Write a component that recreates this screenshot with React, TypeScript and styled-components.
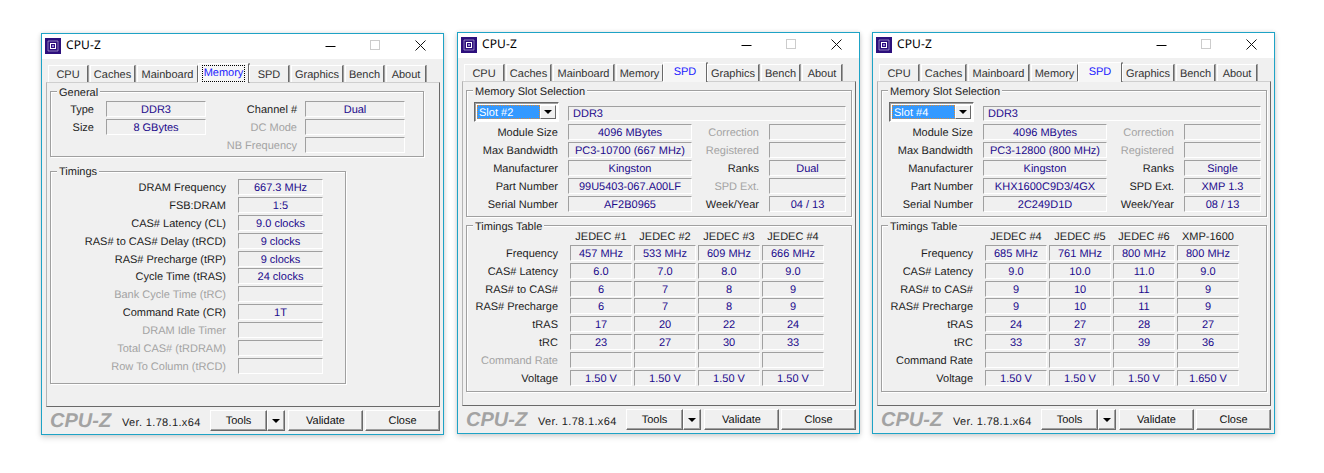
import React from "react";
import styled, { createGlobalStyle } from "styled-components";

const Global = createGlobalStyle`
  html, body { margin: 0; padding: 0; background: #fff; }
  * { box-sizing: border-box; }
`;

const Desktop = styled.div`
  display: flex;
  width: 1324px;
  height: 473px;
  padding: 32px 0 0 41px;
  gap: 13px;
  overflow: hidden;
  font-family: "Liberation Sans", Arial, sans-serif;
  font-size: 11px;
  text-rendering: geometricPrecision;
  color: #111;
`;

const Win = styled.div<{ $drop?: number; $gapFix?: number }>`
  display: flex;
  flex-direction: column;
  width: 403px;
  height: 402px;
  margin-top: ${(p) => p.$drop ?? 0}px;
  margin-right: ${(p) => p.$gapFix ?? 0}px;
  border: 1px solid #1ea3c6;
  background: #f0f0f0;
  box-shadow: 0 3px 6px rgba(0, 0, 0, 0.14), 0 0 4px rgba(0, 0, 0, 0.12);
  flex: none;
`;

const TitleBar = styled.div`
  display: flex;
  align-items: center;
  height: 25px;
  background: #fff;
  padding: 0 0 2px 3px;
  flex: none;
`;

const TitleText = styled.span`
  margin: -2px 0 0 5px;
  font-family: "Noto Sans", "Open Sans", sans-serif;
  font-size: 12px;
  letter-spacing: 0.1px;
  color: #000;
  flex: 1;
`;

const Ctrl = styled.span`
  display: flex;
  width: 45px;
  height: 20px;
  align-items: center;
  justify-content: center;
`;

const Tabs = styled.div`
  display: flex;
  align-items: flex-end;
  height: 23px;
  padding-left: 6px;
  gap: 2px;
  flex: none;
  position: relative;
  z-index: 1;
`;

const Tab = styled.div<{ $w: number; $active?: boolean }>`
  display: flex;
  align-items: center;
  justify-content: center;
  width: ${(p) => p.$w + (p.$active ? 4 : 0)}px;
  height: ${(p) => (p.$active ? 20 : 17)}px;
  margin: ${(p) => (p.$active ? "0 -2px -1px" : "0")};
  padding: ${(p) => (p.$active ? "0 0 1px" : "1px 0 0")};
  background: ${(p) => (p.$active ? "#f6f6f6" : "#f0f0f0")};
  border-top: 1px solid #fff;
  border-left: 1px solid #fff;
  border-right: 1px solid #696969;
  box-shadow: 1px 0 0 #a0a0a0;
  color: ${(p) => (p.$active ? "#1a1aff" : "#333")};
  flex: none;
`;

const Focus = styled.span`
  padding: 0 1px;
  outline: 1px dotted #000;
  outline-offset: 0;
  line-height: 15px;
`;

const Panel = styled.div`
  flex: 1;
  margin: 0 3px 0 4px;
  padding: 8px 3px 0;
  border-top: 1px solid #cfcfcf;
  border-left: 1px solid #b4b4b4;
  border-right: 1px solid #696969;
  border-bottom: 1px solid #696969;
  min-height: 0;
`;

const Group = styled.div<{ $w: number; $mt?: number }>`
  position: relative;
  width: ${(p) => p.$w}px;
  margin-top: ${(p) => p.$mt ?? 0}px;
  border: 1px solid #a0a0a0;
  box-shadow: 1px 1px 0 #fff, inset 1px 1px 0 #fff;
`;

const Legend = styled.span<{ $top?: number }>`
  position: absolute;
  top: ${(p) => p.$top ?? -8}px;
  left: 6px;
  padding: 0 2px;
  background: #f0f0f0;
  color: #222;
  line-height: 18px;
  height: 15px;
`;

const FormGrid = styled.div<{ $cols: string; $pad: string; $gap?: number; $colGap?: number }>`
  display: grid;
  grid-template-columns: ${(p) => p.$cols};
  grid-auto-rows: 16px;
  row-gap: ${(p) => p.$gap ?? 2}px;
  column-gap: ${(p) => p.$colGap ?? 0}px;
  padding: ${(p) => p.$pad};
`;

const Label = styled.span<{ $off?: boolean; $pr?: number }>`
  display: block;
  text-align: right;
  white-space: nowrap;
  line-height: 18px;
  height: 16px;
  padding-right: ${(p) => p.$pr ?? 10}px;
  color: ${(p) => (p.$off ? "#a3a3a3" : "#1c1c1c")};
`;

const Field = styled.span<{ $left?: boolean }>`
  display: block;
  height: 16px;
  line-height: 16px;
  border-top: 1px solid #a0a0a0;
  border-left: 1px solid #a0a0a0;
  border-bottom: 1px solid #fff;
  border-right: 1px solid #fff;
  color: #1c0a8c;
  text-align: ${(p) => (p.$left ? "left" : "center")};
  padding-left: ${(p) => (p.$left ? 4 : 0)}px;
  white-space: nowrap;
`;

const Head = styled.span`
  display: block;
  text-align: center;
  line-height: 20px;
  height: 16px;
  color: #1c1c1c;
`;

const SlotHead = styled.div`
  padding-top: 11px;
`;

const SlotRow = styled.div`
  display: flex;
  align-items: flex-end;
  height: 20px;
  margin-bottom: 2px;
`;

const Combo = styled.div`
  display: flex;
  width: 85px;
  height: 20px;
  margin: 0 9px 0 7px;
  padding: 2px;
  border-top: 1px solid #696969;
  border-left: 1px solid #696969;
  border-right: 1px solid #fff;
  border-bottom: 1px solid #fff;
  box-shadow: inset 1px 1px 0 #a0a0a0;
  background: #fff;
  flex: none;
`;

const ComboValue = styled.span`
  flex: 1;
  background: #3399ff;
  color: #fff;
  outline: 1px dotted #d98a3a;
  outline-offset: -1px;
  line-height: 16px;
  height: 14px;
  padding-left: 2px;
`;

const ComboArrow = styled.span`
  display: flex;
  align-items: center;
  justify-content: center;
  width: 16px;
  background: #f0f0f0;
  border-top: 1px solid #fff;
  border-left: 1px solid #fff;
  border-right: 1px solid #696969;
  border-bottom: 1px solid #696969;
`;

const Tri = styled.i`
  display: block;
  width: 0;
  height: 0;
  border-left: 4px solid transparent;
  border-right: 4px solid transparent;
  border-top: 4px solid #000;
`;

const SlotField = styled(Field)`
  width: 278px;
  height: 15px;
  margin-bottom: 1px;
  line-height: 15px;
`;

const Footer = styled.div`
  display: flex;
  align-items: center;
  height: 27px;
  padding: 0 3px 0 8px;
  flex: none;
`;

const Logo = styled.span`
  font-size: 20px;
  font-weight: bold;
  font-style: italic;
  color: #a3a3a3;
  width: 72px;
  padding-top: 2px;
`;

const Version = styled.span`
  flex: 1;
  padding-top: 4px;
  color: #222;
  letter-spacing: 0.35px;
`;

const Btn = styled.div<{ $w: number; $gap?: number }>`
  display: flex;
  align-items: center;
  justify-content: center;
  width: ${(p) => p.$w}px;
  height: 21px;
  margin-left: ${(p) => p.$gap ?? 0}px;
  background: #f0f0f0;
  border-top: 1px solid #fff;
  border-left: 1px solid #fff;
  border-right: 1px solid #696969;
  border-bottom: 1px solid #696969;
  box-shadow: inset -1px -1px 0 #a0a0a0;
  color: #111;
  flex: none;
`;

const CpuIcon = () => (
  <svg width="16" height="16" viewBox="0 0 16 16">
    <rect width="16" height="16" fill="#2c0f7c" />
    <g fill="#e8e4f4">
      {[3, 5, 7, 9, 11].map((v) => (
        <React.Fragment key={v}>
          <rect x={v + 0.5} y="2.5" width="1" height="1" />
          <rect x={v + 0.5} y="12.5" width="1" height="1" />
          <rect x="2.5" y={v + 0.5} width="1" height="1" />
          <rect x="12.5" y={v + 0.5} width="1" height="1" />
        </React.Fragment>
      ))}
    </g>
    <rect x="5.5" y="5.5" width="5" height="5" fill="none" stroke="#fff" strokeWidth="1" />
    <rect x="7" y="7" width="2" height="2" fill="#9a86d8" />
  </svg>
);

const Minimize = () => (
  <svg width="11" height="10" viewBox="0 0 11 10">
    <path d="M0.5 5.5H10.5" stroke="#000" strokeWidth="1" />
  </svg>
);
const Maximize = () => (
  <svg width="11" height="11" viewBox="0 0 11 11">
    <rect x="0.5" y="0.5" width="9" height="9" fill="none" stroke="#cccccc" />
  </svg>
);
const CloseX = () => (
  <svg width="11" height="11" viewBox="0 0 11 11">
    <path d="M0.5 0.5L10.5 10.5M10.5 0.5L0.5 10.5" stroke="#111" strokeWidth="1" />
  </svg>
);

const TABS: [string, number][] = [
  ["CPU", 40], ["Caches", 45], ["Mainboard", 61], ["Memory", 47],
  ["SPD", 40], ["Graphics", 52], ["Bench", 39], ["About", 40],
];

const Frame: React.FC<{ active: string; focus?: boolean; drop?: number; gapFix?: number; children: React.ReactNode }> = ({ active, focus, drop, gapFix, children }) => (
  <Win $drop={drop} $gapFix={gapFix}>
    <TitleBar>
      <CpuIcon />
      <TitleText>CPU-Z</TitleText>
      <Ctrl><Minimize /></Ctrl>
      <Ctrl><Maximize /></Ctrl>
      <Ctrl><CloseX /></Ctrl>
    </TitleBar>
    <Tabs>
      {TABS.map(([n, w]) => (
        <Tab key={n} $w={w} $active={n === active}>
          {n === active && focus ? <Focus>{n}</Focus> : n}
        </Tab>
      ))}
    </Tabs>
    <Panel>{children}</Panel>
    <Footer>
      <Logo>CPU-Z</Logo>
      <Version>Ver. 1.78.1.x64</Version>
      <Btn $w={57}>Tools</Btn>
      <Btn $w={18}><Tri /></Btn>
      <Btn $w={75} $gap={3}>Validate</Btn>
      <Btn $w={75} $gap={2}>Close</Btn>
    </Footer>
  </Win>
);

const TIMINGS: [string, string, boolean?][] = [
  ["DRAM Frequency", "667.3 MHz"],
  ["FSB:DRAM", "1:5"],
  ["CAS# Latency (CL)", "9.0 clocks"],
  ["RAS# to CAS# Delay (tRCD)", "9 clocks"],
  ["RAS# Precharge (tRP)", "9 clocks"],
  ["Cycle Time (tRAS)", "24 clocks"],
  ["Bank Cycle Time (tRC)", "", true],
  ["Command Rate (CR)", "1T"],
  ["DRAM Idle Timer", "", true],
  ["Total CAS# (tRDRAM)", "", true],
  ["Row To Column (tRCD)", "", true],
];

const MemoryWin = () => (
  <Frame active="Memory" focus drop={1}>
    <Group $w={374}>
      <Legend>General</Legend>
      <FormGrid $cols="55px 100px 99px 100px" $pad="9px 0 3px 0">
        <Label $pr={12}>Type</Label><Field>DDR3</Field>
        <Label $pr={8}>Channel #</Label><Field>Dual</Field>
        <Label $pr={12}>Size</Label><Field>8 GBytes</Field>
        <Label $pr={8} $off>DC Mode</Label><Field />
        <span /><span />
        <Label $pr={8} $off>NB Frequency</Label><Field />
      </FormGrid>
    </Group>
    <Group $w={296} $mt={14}>
      <Legend $top={-9}>Timings</Legend>
      <FormGrid $cols="187px 85px" $pad="7px 0 9px 0" $gap={1.9}>
        {TIMINGS.map(([l, v, off]) => (
          <React.Fragment key={l}>
            <Label $pr={12} $off={off}>{l}</Label>
            <Field>{v}</Field>
          </React.Fragment>
        ))}
      </FormGrid>
    </Group>
  </Frame>
);

type Spd = {
  slot: string; bw: string; part: string; serial: string; ranks: string;
  ext: string; week: string; heads: string[]; grid: string[][]; crOn?: boolean; gapFix?: number;
};

const ROW_NAMES = ["Frequency", "CAS# Latency", "RAS# to CAS#", "RAS# Precharge", "tRAS", "tRC", "Command Rate", "Voltage"];

const SpdWin: React.FC<{ d: Spd }> = ({ d }) => (
  <Frame active="SPD" gapFix={d.gapFix}>
    <Group $w={386}>
      <Legend>Memory Slot Selection</Legend>
      <SlotHead>
        <SlotRow>
          <Combo>
            <ComboValue>{d.slot}</ComboValue>
            <ComboArrow><Tri /></ComboArrow>
          </Combo>
          <SlotField $left>DDR3</SlotField>
        </SlotRow>
      </SlotHead>
      <FormGrid $cols="101px 124px 77px 77px" $pad="0 0 4px 0">
        <Label>Module Size</Label><Field>4096 MBytes</Field>
        <Label $off>Correction</Label><Field />
        <Label>Max Bandwidth</Label><Field>{d.bw}</Field>
        <Label $off>Registered</Label><Field />
        <Label>Manufacturer</Label><Field>Kingston</Field>
        <Label>Ranks</Label><Field>{d.ranks}</Field>
        <Label>Part Number</Label><Field>{d.part}</Field>
        <Label $off={d.ext === ""}>SPD Ext.</Label><Field>{d.ext}</Field>
        <Label>Serial Number</Label><Field>{d.serial}</Field>
        <Label>Week/Year</Label><Field>{d.week}</Field>
      </FormGrid>
    </Group>
    <Group $w={386} $mt={8}>
      <Legend>Timings Table</Legend>
      <FormGrid $cols="101px repeat(4, 62px)" $pad="1px 0 5px 0" $gap={1.86} $colGap={2}>
        <span />
        {d.heads.map((h, i) => <Head key={i}>{h}</Head>)}
        {ROW_NAMES.map((n, r) => (
          <React.Fragment key={n}>
            <Label $off={n === "Command Rate" && !d.crOn}>{n}</Label>
            {d.grid[r].map((v, c) => <Field key={c}>{v}</Field>)}
          </React.Fragment>
        ))}
      </FormGrid>
    </Group>
  </Frame>
);

const SLOT2: Spd = {
  slot: "Slot #2", bw: "PC3-10700 (667 MHz)", part: "99U5403-067.A00LF", serial: "AF2B0965",
  ranks: "Dual", ext: "", week: "04 / 13", gapFix: -1,
  heads: ["JEDEC #1", "JEDEC #2", "JEDEC #3", "JEDEC #4"],
  grid: [
    ["457 MHz", "533 MHz", "609 MHz", "666 MHz"],
    ["6.0", "7.0", "8.0", "9.0"],
    ["6", "7", "8", "9"],
    ["6", "7", "8", "9"],
    ["17", "20", "22", "24"],
    ["23", "27", "30", "33"],
    ["", "", "", ""],
    ["1.50 V", "1.50 V", "1.50 V", "1.50 V"],
  ],
};

const SLOT4: Spd = {
  slot: "Slot #4", bw: "PC3-12800 (800 MHz)", part: "KHX1600C9D3/4GX", serial: "2C249D1D",
  ranks: "Single", ext: "XMP 1.3", week: "08 / 13", crOn: true,
  heads: ["JEDEC #4", "JEDEC #5", "JEDEC #6", "XMP-1600"],
  grid: [
    ["685 MHz", "761 MHz", "800 MHz", "800 MHz"],
    ["9.0", "10.0", "11.0", "9.0"],
    ["9", "10", "11", "9"],
    ["9", "10", "11", "9"],
    ["24", "27", "28", "27"],
    ["33", "37", "39", "36"],
    ["", "", "", ""],
    ["1.50 V", "1.50 V", "1.50 V", "1.650 V"],
  ],
};

export default function App() {
  return (
    <>
      <Global />
      <Desktop>
        <MemoryWin />
        <SpdWin d={SLOT2} />
        <SpdWin d={SLOT4} />
      </Desktop>
    </>
  );
}
